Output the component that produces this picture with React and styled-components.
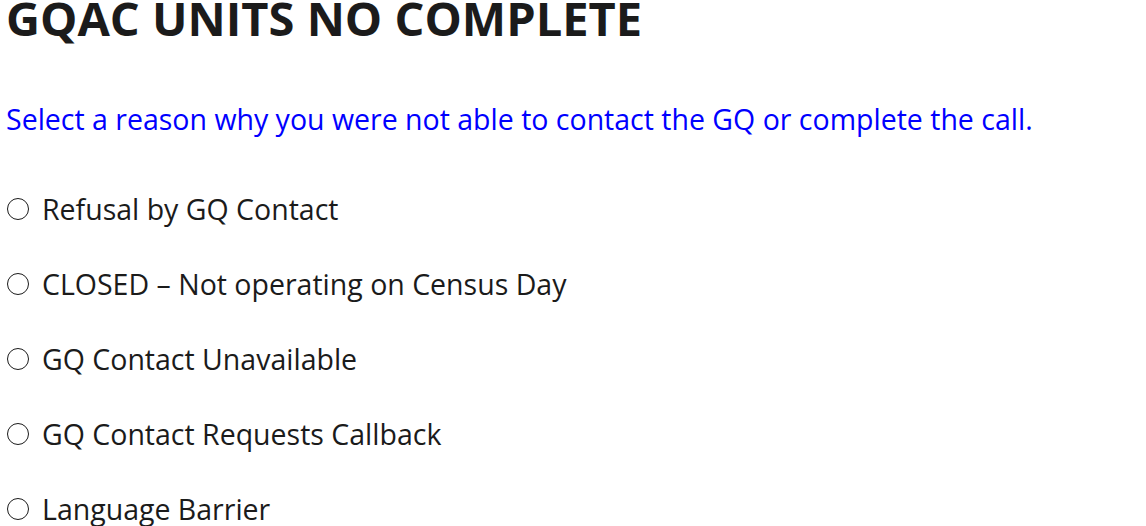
import React, { useState } from 'react';
import styled, { createGlobalStyle } from 'styled-components';

const GlobalStyle = createGlobalStyle`
  html, body {
    margin: 0;
    padding: 0;
    background: #ffffff;
  }
  body {
    font-family: "Segoe UI", "Open Sans", "Noto Sans", sans-serif;
    color: #1b1b1b;
  }
`;

const Page = styled.div`
  padding: 0 6px;
  overflow: hidden;
  height: 526px;
`;

const Title = styled.h1`
  margin: -9px 0 0 0;
  font-size: 47px;
  line-height: 54px;
  font-weight: 700;
  color: #1b1b1b;
`;

const Prompt = styled.p`
  margin: 56px 0 0 0;
  font-size: 28.5px;
  line-height: 36px;
  color: #0000ff;
`;

const OptionList = styled.div`
  display: flex;
  flex-direction: column;
  gap: 39px;
  margin-top: 54px;
`;

const Option = styled.label`
  display: flex;
  align-items: center;
  gap: 13px;
  font-size: 28.5px;
  line-height: 36px;
  cursor: pointer;
`;

const Radio = styled.input`
  appearance: none;
  margin: 0 0 0 1px;
  width: 22px;
  height: 22px;
  border: 1.5px solid #1b1b1b;
  border-radius: 50%;
  background: #fff;
  flex: none;

  &:checked {
    background: radial-gradient(circle, #1b1b1b 45%, #fff 50%);
  }
`;

const reasons = [
  'Refusal by GQ Contact',
  'CLOSED \u2013 Not operating on Census Day',
  'GQ Contact Unavailable',
  'GQ Contact Requests Callback',
  'Language Barrier',
];

const App = () => {
  const [reason, setReason] = useState(null);

  return (
    <Page>
      <GlobalStyle />
      <Title>GQAC UNITS NO COMPLETE</Title>
      <Prompt>Select a reason why you were not able to contact the GQ or complete the call.</Prompt>
      <OptionList>
        {reasons.map((r) => (
          <Option key={r}>
            <Radio
              type="radio"
              name="reason"
              checked={reason === r}
              onChange={() => setReason(r)}
            />
            {r}
          </Option>
        ))}
      </OptionList>
    </Page>
  );
};

export default App;
